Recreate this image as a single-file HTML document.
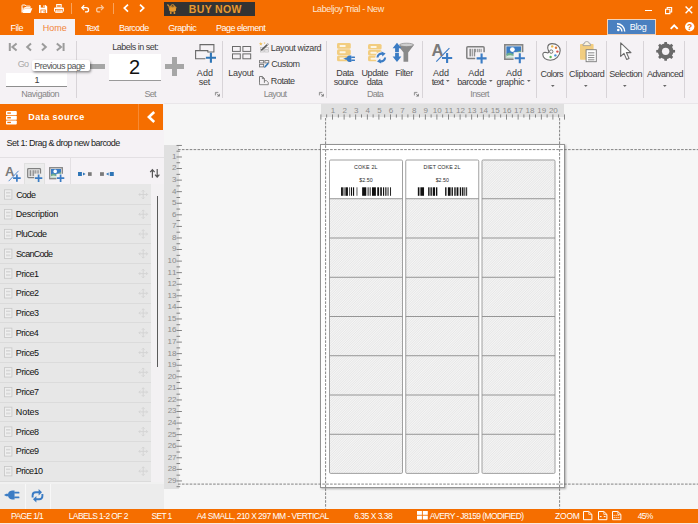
<!DOCTYPE html>
<html><head><meta charset="utf-8"><title>Labeljoy Trial - New</title>
<style>
html,body{margin:0;padding:0;}
body{width:698px;height:524px;overflow:hidden;position:relative;background:#F5F5F5;font-family:"Liberation Sans",sans-serif;}
.a{position:absolute;}
.t{position:absolute;white-space:nowrap;line-height:12px;height:12px;}
svg{position:absolute;overflow:visible;}
</style></head><body>
<div class="a" style="left:0px;top:0px;width:698.00px;height:35.20px;background:#F56E00"></div>
<div class="a" style="left:34.1px;top:18.6px;width:40.50px;height:17.40px;background:#F5F2F5"></div>
<div class="a" style="left:0px;top:35.2px;width:698.00px;height:68.20px;background:#F5F2F5"></div>
<div class="a" style="left:0px;top:103px;width:698.00px;height:1.00px;background:#E9E6E9"></div>
<div class="a" style="left:163.5px;top:104px;width:534.50px;height:405.00px;background:#F6F6F6"></div>
<div class="a" style="left:0px;top:103.4px;width:163.50px;height:405.60px;background:#F5F2F5"></div>
<div class="a" style="left:0px;top:103.6px;width:163.30px;height:26.40px;background:#F56E00"></div>
<div class="a" style="left:138px;top:103.6px;width:1.00px;height:26.40px;background:#F78A33"></div>
<div class="a" style="left:0px;top:156.5px;width:163.50px;height:1.00px;background:#E3E0E3"></div>
<div class="a" style="left:23.5px;top:163px;width:21.30px;height:21.50px;background:#ECECEC;border:1px solid #E0E0E0;border-bottom:none;box-sizing:border-box"></div>
<div class="a" style="left:70px;top:157.5px;width:1.00px;height:27.00px;background:#E3E0E3"></div>
<div class="a" style="left:0px;top:184px;width:163.50px;height:300.00px;background:#F3F1F3"></div>
<div class="a" style="left:0px;top:184.4px;width:151.00px;height:297.20px;background:#E7E7E7"></div>
<div class="a" style="left:0px;top:203.9px;width:151.00px;height:1.00px;background:#DBDBDB"></div>
<div class="a" style="left:0px;top:223.66px;width:151.00px;height:1.00px;background:#DBDBDB"></div>
<div class="a" style="left:0px;top:243.42px;width:151.00px;height:1.00px;background:#DBDBDB"></div>
<div class="a" style="left:0px;top:263.18px;width:151.00px;height:1.00px;background:#DBDBDB"></div>
<div class="a" style="left:0px;top:282.94px;width:151.00px;height:1.00px;background:#DBDBDB"></div>
<div class="a" style="left:0px;top:302.7px;width:151.00px;height:1.00px;background:#DBDBDB"></div>
<div class="a" style="left:0px;top:322.46px;width:151.00px;height:1.00px;background:#DBDBDB"></div>
<div class="a" style="left:0px;top:342.22px;width:151.00px;height:1.00px;background:#DBDBDB"></div>
<div class="a" style="left:0px;top:361.98px;width:151.00px;height:1.00px;background:#DBDBDB"></div>
<div class="a" style="left:0px;top:381.74px;width:151.00px;height:1.00px;background:#DBDBDB"></div>
<div class="a" style="left:0px;top:401.5px;width:151.00px;height:1.00px;background:#DBDBDB"></div>
<div class="a" style="left:0px;top:421.26px;width:151.00px;height:1.00px;background:#DBDBDB"></div>
<div class="a" style="left:0px;top:441.02px;width:151.00px;height:1.00px;background:#DBDBDB"></div>
<div class="a" style="left:0px;top:460.78px;width:151.00px;height:1.00px;background:#DBDBDB"></div>
<div class="a" style="left:0px;top:480.54px;width:151.00px;height:1.00px;background:#DBDBDB"></div>
<div class="a" style="left:0px;top:481.5px;width:163.50px;height:2.00px;background:#F1F1F1"></div>
<div class="a" style="left:156.8px;top:196.3px;width:1.20px;height:170.70px;background:#5A5A5A"></div>
<div class="a" style="left:0px;top:483.5px;width:163.50px;height:25.50px;background:#ECECEC"></div>
<div class="a" style="left:25px;top:484px;width:1.00px;height:25.00px;background:#F7F7F7"></div>
<div class="a" style="left:49.8px;top:484px;width:1.00px;height:25.00px;background:#F7F7F7"></div>
<div class="a" style="left:0px;top:508.5px;width:698.00px;height:14.30px;background:#F56E00"></div>
<div class="a" style="left:0px;top:522.8px;width:698.00px;height:1.20px;background:#FBE9DC"></div>
<div class="a" style="left:76.0px;top:40.5px;width:1.00px;height:57.00px;background:#D8D4D8"></div>
<div class="a" style="left:222.1px;top:40.5px;width:1.00px;height:57.00px;background:#D8D4D8"></div>
<div class="a" style="left:325.9px;top:40.5px;width:1.00px;height:57.00px;background:#D8D4D8"></div>
<div class="a" style="left:422.3px;top:40.5px;width:1.00px;height:57.00px;background:#D8D4D8"></div>
<div class="a" style="left:535.8px;top:40.5px;width:1.00px;height:57.00px;background:#D8D4D8"></div>
<div class="a" style="left:565.8px;top:40.5px;width:1.00px;height:57.00px;background:#D8D4D8"></div>
<div class="a" style="left:606.0px;top:40.5px;width:1.00px;height:57.00px;background:#D8D4D8"></div>
<div class="a" style="left:643.1px;top:40.5px;width:1.00px;height:57.00px;background:#D8D4D8"></div>
<div class="a" style="left:684.0px;top:40.5px;width:1.00px;height:57.00px;background:#D8D4D8"></div>
<div class="a" style="left:6px;top:73.4px;width:61.00px;height:14.00px;background:#fff;border-bottom:1px solid #8E8E8E;box-sizing:border-box"></div>
<div class="a" style="left:109px;top:54px;width:52.00px;height:26.60px;background:#fff;border-bottom:1px solid #9A9A9A;box-sizing:border-box"></div>
<div class="a" style="left:89.5px;top:64px;width:15.50px;height:4.70px;background:#A6A6A6"></div>
<div class="a" style="left:165px;top:64.3px;width:19.00px;height:4.40px;background:#A6A6A6"></div>
<div class="a" style="left:172.3px;top:57px;width:4.40px;height:19.00px;background:#A6A6A6"></div>
<div class="a" style="left:31.5px;top:59.6px;width:58.00px;height:11.90px;background:#fff;border-radius:2px;box-shadow:1px 1.5px 2.5px rgba(0,0,0,.45)"></div>
<div class="a" style="left:163.7px;top:2px;width:91.30px;height:14.00px;background:#333"></div>
<div class="a" style="left:606.7px;top:19.2px;width:49.10px;height:15.60px;background:#4A80C0;border:1px solid #F3D2B8;box-sizing:border-box"></div>
<div class="a" style="left:321px;top:103.8px;width:243.20px;height:13.20px;background:#E0E0E0"></div>
<div class="a" style="left:163.5px;top:145px;width:15.10px;height:343.70px;background:#E0E0E0"></div>
<svg style="left:0px;top:0px;" width="698" height="524" viewBox="0 0 698 524"><rect x="320.50" y="114.4" width="0.8" height="5.2" fill="#6E6E6E"/><rect x="326.30" y="114.4" width="0.8" height="3.2" fill="#6E6E6E"/><rect x="332.10" y="114.4" width="0.8" height="5.2" fill="#6E6E6E"/><rect x="337.90" y="114.4" width="0.8" height="3.2" fill="#6E6E6E"/><rect x="343.70" y="114.4" width="0.8" height="5.2" fill="#6E6E6E"/><rect x="349.50" y="114.4" width="0.8" height="3.2" fill="#6E6E6E"/><rect x="355.30" y="114.4" width="0.8" height="5.2" fill="#6E6E6E"/><rect x="361.10" y="114.4" width="0.8" height="3.2" fill="#6E6E6E"/><rect x="366.90" y="114.4" width="0.8" height="5.2" fill="#6E6E6E"/><rect x="372.70" y="114.4" width="0.8" height="3.2" fill="#6E6E6E"/><rect x="378.50" y="114.4" width="0.8" height="5.2" fill="#6E6E6E"/><rect x="384.30" y="114.4" width="0.8" height="3.2" fill="#6E6E6E"/><rect x="390.10" y="114.4" width="0.8" height="5.2" fill="#6E6E6E"/><rect x="395.90" y="114.4" width="0.8" height="3.2" fill="#6E6E6E"/><rect x="401.70" y="114.4" width="0.8" height="5.2" fill="#6E6E6E"/><rect x="407.50" y="114.4" width="0.8" height="3.2" fill="#6E6E6E"/><rect x="413.30" y="114.4" width="0.8" height="5.2" fill="#6E6E6E"/><rect x="419.10" y="114.4" width="0.8" height="3.2" fill="#6E6E6E"/><rect x="424.90" y="114.4" width="0.8" height="5.2" fill="#6E6E6E"/><rect x="430.70" y="114.4" width="0.8" height="3.2" fill="#6E6E6E"/><rect x="436.50" y="114.4" width="0.8" height="5.2" fill="#6E6E6E"/><rect x="442.30" y="114.4" width="0.8" height="3.2" fill="#6E6E6E"/><rect x="448.10" y="114.4" width="0.8" height="5.2" fill="#6E6E6E"/><rect x="453.90" y="114.4" width="0.8" height="3.2" fill="#6E6E6E"/><rect x="459.70" y="114.4" width="0.8" height="5.2" fill="#6E6E6E"/><rect x="465.50" y="114.4" width="0.8" height="3.2" fill="#6E6E6E"/><rect x="471.30" y="114.4" width="0.8" height="5.2" fill="#6E6E6E"/><rect x="477.10" y="114.4" width="0.8" height="3.2" fill="#6E6E6E"/><rect x="482.90" y="114.4" width="0.8" height="5.2" fill="#6E6E6E"/><rect x="488.70" y="114.4" width="0.8" height="3.2" fill="#6E6E6E"/><rect x="494.50" y="114.4" width="0.8" height="5.2" fill="#6E6E6E"/><rect x="500.30" y="114.4" width="0.8" height="3.2" fill="#6E6E6E"/><rect x="506.10" y="114.4" width="0.8" height="5.2" fill="#6E6E6E"/><rect x="511.90" y="114.4" width="0.8" height="3.2" fill="#6E6E6E"/><rect x="517.70" y="114.4" width="0.8" height="5.2" fill="#6E6E6E"/><rect x="523.50" y="114.4" width="0.8" height="3.2" fill="#6E6E6E"/><rect x="529.30" y="114.4" width="0.8" height="5.2" fill="#6E6E6E"/><rect x="535.10" y="114.4" width="0.8" height="3.2" fill="#6E6E6E"/><rect x="540.90" y="114.4" width="0.8" height="5.2" fill="#6E6E6E"/><rect x="546.70" y="114.4" width="0.8" height="3.2" fill="#6E6E6E"/><rect x="552.50" y="114.4" width="0.8" height="5.2" fill="#6E6E6E"/><rect x="558.30" y="114.4" width="0.8" height="3.2" fill="#6E6E6E"/><rect x="564.10" y="114.4" width="0.8" height="5.2" fill="#6E6E6E"/><rect x="176.5" y="144.95" width="5.4" height="0.9" fill="#777"/><rect x="176.5" y="150.74" width="3.6" height="0.9" fill="#777"/><rect x="176.5" y="156.52" width="5.4" height="0.9" fill="#777"/><rect x="176.5" y="162.31" width="3.6" height="0.9" fill="#777"/><rect x="176.5" y="168.09" width="5.4" height="0.9" fill="#777"/><rect x="176.5" y="173.88" width="3.6" height="0.9" fill="#777"/><rect x="176.5" y="179.66" width="5.4" height="0.9" fill="#777"/><rect x="176.5" y="185.45" width="3.6" height="0.9" fill="#777"/><rect x="176.5" y="191.23" width="5.4" height="0.9" fill="#777"/><rect x="176.5" y="197.02" width="3.6" height="0.9" fill="#777"/><rect x="176.5" y="202.80" width="5.4" height="0.9" fill="#777"/><rect x="176.5" y="208.59" width="3.6" height="0.9" fill="#777"/><rect x="176.5" y="214.37" width="5.4" height="0.9" fill="#777"/><rect x="176.5" y="220.16" width="3.6" height="0.9" fill="#777"/><rect x="176.5" y="225.94" width="5.4" height="0.9" fill="#777"/><rect x="176.5" y="231.73" width="3.6" height="0.9" fill="#777"/><rect x="176.5" y="237.51" width="5.4" height="0.9" fill="#777"/><rect x="176.5" y="243.30" width="3.6" height="0.9" fill="#777"/><rect x="176.5" y="249.08" width="5.4" height="0.9" fill="#777"/><rect x="176.5" y="254.87" width="3.6" height="0.9" fill="#777"/><rect x="176.5" y="260.65" width="5.4" height="0.9" fill="#777"/><rect x="176.5" y="266.44" width="3.6" height="0.9" fill="#777"/><rect x="176.5" y="272.22" width="5.4" height="0.9" fill="#777"/><rect x="176.5" y="278.01" width="3.6" height="0.9" fill="#777"/><rect x="176.5" y="283.79" width="5.4" height="0.9" fill="#777"/><rect x="176.5" y="289.57" width="3.6" height="0.9" fill="#777"/><rect x="176.5" y="295.36" width="5.4" height="0.9" fill="#777"/><rect x="176.5" y="301.15" width="3.6" height="0.9" fill="#777"/><rect x="176.5" y="306.93" width="5.4" height="0.9" fill="#777"/><rect x="176.5" y="312.72" width="3.6" height="0.9" fill="#777"/><rect x="176.5" y="318.50" width="5.4" height="0.9" fill="#777"/><rect x="176.5" y="324.29" width="3.6" height="0.9" fill="#777"/><rect x="176.5" y="330.07" width="5.4" height="0.9" fill="#777"/><rect x="176.5" y="335.86" width="3.6" height="0.9" fill="#777"/><rect x="176.5" y="341.64" width="5.4" height="0.9" fill="#777"/><rect x="176.5" y="347.43" width="3.6" height="0.9" fill="#777"/><rect x="176.5" y="353.21" width="5.4" height="0.9" fill="#777"/><rect x="176.5" y="359.00" width="3.6" height="0.9" fill="#777"/><rect x="176.5" y="364.78" width="5.4" height="0.9" fill="#777"/><rect x="176.5" y="370.56" width="3.6" height="0.9" fill="#777"/><rect x="176.5" y="376.35" width="5.4" height="0.9" fill="#777"/><rect x="176.5" y="382.14" width="3.6" height="0.9" fill="#777"/><rect x="176.5" y="387.92" width="5.4" height="0.9" fill="#777"/><rect x="176.5" y="393.70" width="3.6" height="0.9" fill="#777"/><rect x="176.5" y="399.49" width="5.4" height="0.9" fill="#777"/><rect x="176.5" y="405.28" width="3.6" height="0.9" fill="#777"/><rect x="176.5" y="411.06" width="5.4" height="0.9" fill="#777"/><rect x="176.5" y="416.84" width="3.6" height="0.9" fill="#777"/><rect x="176.5" y="422.63" width="5.4" height="0.9" fill="#777"/><rect x="176.5" y="428.42" width="3.6" height="0.9" fill="#777"/><rect x="176.5" y="434.20" width="5.4" height="0.9" fill="#777"/><rect x="176.5" y="439.99" width="3.6" height="0.9" fill="#777"/><rect x="176.5" y="445.77" width="5.4" height="0.9" fill="#777"/><rect x="176.5" y="451.56" width="3.6" height="0.9" fill="#777"/><rect x="176.5" y="457.34" width="5.4" height="0.9" fill="#777"/><rect x="176.5" y="463.13" width="3.6" height="0.9" fill="#777"/><rect x="176.5" y="468.91" width="5.4" height="0.9" fill="#777"/><rect x="176.5" y="474.69" width="3.6" height="0.9" fill="#777"/><rect x="176.5" y="480.48" width="5.4" height="0.9" fill="#777"/><rect x="176.5" y="486.27" width="3.6" height="0.9" fill="#777"/></svg>
<div class="a" style="left:320px;top:144px;width:245.00px;height:344.00px;background:#fff;border:1px solid #939393;box-sizing:border-box;box-shadow:0.5px 0.5px 2px rgba(0,0,0,.3)"></div>
<svg style="left:0px;top:0px;" width="698" height="524" viewBox="0 0 698 524"><rect x="329.50" y="159.50" width="73.00" height="39.25" fill="#fff"/><rect x="329.50" y="198.75" width="73.00" height="39.25" fill="#FAFAFA"/><rect x="329.50" y="238.00" width="73.00" height="39.25" fill="#FAFAFA"/><rect x="329.50" y="277.25" width="73.00" height="39.25" fill="#FAFAFA"/><rect x="329.50" y="316.50" width="73.00" height="39.25" fill="#FAFAFA"/><rect x="329.50" y="355.75" width="73.00" height="39.25" fill="#FAFAFA"/><rect x="329.50" y="395.00" width="73.00" height="39.25" fill="#FAFAFA"/><rect x="329.50" y="434.25" width="73.00" height="39.25" fill="#FAFAFA"/><rect x="405.75" y="159.50" width="73.00" height="39.25" fill="#fff"/><rect x="405.75" y="198.75" width="73.00" height="39.25" fill="#FAFAFA"/><rect x="405.75" y="238.00" width="73.00" height="39.25" fill="#FAFAFA"/><rect x="405.75" y="277.25" width="73.00" height="39.25" fill="#FAFAFA"/><rect x="405.75" y="316.50" width="73.00" height="39.25" fill="#FAFAFA"/><rect x="405.75" y="355.75" width="73.00" height="39.25" fill="#FAFAFA"/><rect x="405.75" y="395.00" width="73.00" height="39.25" fill="#FAFAFA"/><rect x="405.75" y="434.25" width="73.00" height="39.25" fill="#FAFAFA"/><rect x="482.00" y="159.50" width="73.00" height="39.25" fill="#FAFAFA"/><rect x="482.00" y="198.75" width="73.00" height="39.25" fill="#FAFAFA"/><rect x="482.00" y="238.00" width="73.00" height="39.25" fill="#FAFAFA"/><rect x="482.00" y="277.25" width="73.00" height="39.25" fill="#FAFAFA"/><rect x="482.00" y="316.50" width="73.00" height="39.25" fill="#FAFAFA"/><rect x="482.00" y="355.75" width="73.00" height="39.25" fill="#FAFAFA"/><rect x="482.00" y="395.00" width="73.00" height="39.25" fill="#FAFAFA"/><rect x="482.00" y="434.25" width="73.00" height="39.25" fill="#FAFAFA"/><defs><clipPath id="lc"><rect x="329.50" y="198.75" width="73.00" height="39.25"/><rect x="329.50" y="238.00" width="73.00" height="39.25"/><rect x="329.50" y="277.25" width="73.00" height="39.25"/><rect x="329.50" y="316.50" width="73.00" height="39.25"/><rect x="329.50" y="355.75" width="73.00" height="39.25"/><rect x="329.50" y="395.00" width="73.00" height="39.25"/><rect x="329.50" y="434.25" width="73.00" height="39.25"/><rect x="405.75" y="198.75" width="73.00" height="39.25"/><rect x="405.75" y="238.00" width="73.00" height="39.25"/><rect x="405.75" y="277.25" width="73.00" height="39.25"/><rect x="405.75" y="316.50" width="73.00" height="39.25"/><rect x="405.75" y="355.75" width="73.00" height="39.25"/><rect x="405.75" y="395.00" width="73.00" height="39.25"/><rect x="405.75" y="434.25" width="73.00" height="39.25"/><rect x="482.00" y="159.50" width="73.00" height="39.25"/><rect x="482.00" y="198.75" width="73.00" height="39.25"/><rect x="482.00" y="238.00" width="73.00" height="39.25"/><rect x="482.00" y="277.25" width="73.00" height="39.25"/><rect x="482.00" y="316.50" width="73.00" height="39.25"/><rect x="482.00" y="355.75" width="73.00" height="39.25"/><rect x="482.00" y="395.00" width="73.00" height="39.25"/><rect x="482.00" y="434.25" width="73.00" height="39.25"/></clipPath></defs><path clip-path="url(#lc)" d="M15.00 473.50L329.00 159.50M16.72 473.50L330.72 159.50M18.44 473.50L332.44 159.50M20.16 473.50L334.16 159.50M21.88 473.50L335.88 159.50M23.60 473.50L337.60 159.50M25.32 473.50L339.32 159.50M27.04 473.50L341.04 159.50M28.76 473.50L342.76 159.50M30.48 473.50L344.48 159.50M32.20 473.50L346.20 159.50M33.92 473.50L347.92 159.50M35.64 473.50L349.64 159.50M37.36 473.50L351.36 159.50M39.08 473.50L353.08 159.50M40.80 473.50L354.80 159.50M42.52 473.50L356.52 159.50M44.24 473.50L358.24 159.50M45.96 473.50L359.96 159.50M47.68 473.50L361.68 159.50M49.40 473.50L363.40 159.50M51.12 473.50L365.12 159.50M52.84 473.50L366.84 159.50M54.56 473.50L368.56 159.50M56.28 473.50L370.28 159.50M58.00 473.50L372.00 159.50M59.72 473.50L373.72 159.50M61.44 473.50L375.44 159.50M63.16 473.50L377.16 159.50M64.88 473.50L378.88 159.50M66.60 473.50L380.60 159.50M68.32 473.50L382.32 159.50M70.04 473.50L384.04 159.50M71.76 473.50L385.76 159.50M73.48 473.50L387.48 159.50M75.20 473.50L389.20 159.50M76.92 473.50L390.92 159.50M78.64 473.50L392.64 159.50M80.36 473.50L394.36 159.50M82.08 473.50L396.08 159.50M83.80 473.50L397.80 159.50M85.52 473.50L399.52 159.50M87.24 473.50L401.24 159.50M88.96 473.50L402.96 159.50M90.68 473.50L404.68 159.50M92.40 473.50L406.40 159.50M94.12 473.50L408.12 159.50M95.84 473.50L409.84 159.50M97.56 473.50L411.56 159.50M99.28 473.50L413.28 159.50M101.00 473.50L415.00 159.50M102.72 473.50L416.72 159.50M104.44 473.50L418.44 159.50M106.16 473.50L420.16 159.50M107.88 473.50L421.88 159.50M109.60 473.50L423.60 159.50M111.32 473.50L425.32 159.50M113.04 473.50L427.04 159.50M114.76 473.50L428.76 159.50M116.48 473.50L430.48 159.50M118.20 473.50L432.20 159.50M119.92 473.50L433.92 159.50M121.64 473.50L435.64 159.50M123.36 473.50L437.36 159.50M125.08 473.50L439.08 159.50M126.80 473.50L440.80 159.50M128.52 473.50L442.52 159.50M130.24 473.50L444.24 159.50M131.96 473.50L445.96 159.50M133.68 473.50L447.68 159.50M135.40 473.50L449.40 159.50M137.12 473.50L451.12 159.50M138.84 473.50L452.84 159.50M140.56 473.50L454.56 159.50M142.28 473.50L456.28 159.50M144.00 473.50L458.00 159.50M145.72 473.50L459.72 159.50M147.44 473.50L461.44 159.50M149.16 473.50L463.16 159.50M150.88 473.50L464.88 159.50M152.60 473.50L466.60 159.50M154.32 473.50L468.32 159.50M156.04 473.50L470.04 159.50M157.76 473.50L471.76 159.50M159.48 473.50L473.48 159.50M161.20 473.50L475.20 159.50M162.92 473.50L476.92 159.50M164.64 473.50L478.64 159.50M166.36 473.50L480.36 159.50M168.08 473.50L482.08 159.50M169.80 473.50L483.80 159.50M171.52 473.50L485.52 159.50M173.24 473.50L487.24 159.50M174.96 473.50L488.96 159.50M176.68 473.50L490.68 159.50M178.40 473.50L492.40 159.50M180.12 473.50L494.12 159.50M181.84 473.50L495.84 159.50M183.56 473.50L497.56 159.50M185.28 473.50L499.28 159.50M187.00 473.50L501.00 159.50M188.72 473.50L502.72 159.50M190.44 473.50L504.44 159.50M192.16 473.50L506.16 159.50M193.88 473.50L507.88 159.50M195.60 473.50L509.60 159.50M197.32 473.50L511.32 159.50M199.04 473.50L513.04 159.50M200.76 473.50L514.76 159.50M202.48 473.50L516.48 159.50M204.20 473.50L518.20 159.50M205.92 473.50L519.92 159.50M207.64 473.50L521.64 159.50M209.36 473.50L523.36 159.50M211.08 473.50L525.08 159.50M212.80 473.50L526.80 159.50M214.52 473.50L528.52 159.50M216.24 473.50L530.24 159.50M217.96 473.50L531.96 159.50M219.68 473.50L533.68 159.50M221.40 473.50L535.40 159.50M223.12 473.50L537.12 159.50M224.84 473.50L538.84 159.50M226.56 473.50L540.56 159.50M228.28 473.50L542.28 159.50M230.00 473.50L544.00 159.50M231.72 473.50L545.72 159.50M233.44 473.50L547.44 159.50M235.16 473.50L549.16 159.50M236.88 473.50L550.88 159.50M238.60 473.50L552.60 159.50M240.32 473.50L554.32 159.50M242.04 473.50L556.04 159.50M243.76 473.50L557.76 159.50M245.48 473.50L559.48 159.50M247.20 473.50L561.20 159.50M248.92 473.50L562.92 159.50M250.64 473.50L564.64 159.50M252.36 473.50L566.36 159.50M254.08 473.50L568.08 159.50M255.80 473.50L569.80 159.50M257.52 473.50L571.52 159.50M259.24 473.50L573.24 159.50M260.96 473.50L574.96 159.50M262.68 473.50L576.68 159.50M264.40 473.50L578.40 159.50M266.12 473.50L580.12 159.50M267.84 473.50L581.84 159.50M269.56 473.50L583.56 159.50M271.28 473.50L585.28 159.50M273.00 473.50L587.00 159.50M274.72 473.50L588.72 159.50M276.44 473.50L590.44 159.50M278.16 473.50L592.16 159.50M279.88 473.50L593.88 159.50M281.60 473.50L595.60 159.50M283.32 473.50L597.32 159.50M285.04 473.50L599.04 159.50M286.76 473.50L600.76 159.50M288.48 473.50L602.48 159.50M290.20 473.50L604.20 159.50M291.92 473.50L605.92 159.50M293.64 473.50L607.64 159.50M295.36 473.50L609.36 159.50M297.08 473.50L611.08 159.50M298.80 473.50L612.80 159.50M300.52 473.50L614.52 159.50M302.24 473.50L616.24 159.50M303.96 473.50L617.96 159.50M305.68 473.50L619.68 159.50M307.40 473.50L621.40 159.50M309.12 473.50L623.12 159.50M310.84 473.50L624.84 159.50M312.56 473.50L626.56 159.50M314.28 473.50L628.28 159.50M316.00 473.50L630.00 159.50M317.72 473.50L631.72 159.50M319.44 473.50L633.44 159.50M321.16 473.50L635.16 159.50M322.88 473.50L636.88 159.50M324.60 473.50L638.60 159.50M326.32 473.50L640.32 159.50M328.04 473.50L642.04 159.50M329.76 473.50L643.76 159.50M331.48 473.50L645.48 159.50M333.20 473.50L647.20 159.50M334.92 473.50L648.92 159.50M336.64 473.50L650.64 159.50M338.36 473.50L652.36 159.50M340.08 473.50L654.08 159.50M341.80 473.50L655.80 159.50M343.52 473.50L657.52 159.50M345.24 473.50L659.24 159.50M346.96 473.50L660.96 159.50M348.68 473.50L662.68 159.50M350.40 473.50L664.40 159.50M352.12 473.50L666.12 159.50M353.84 473.50L667.84 159.50M355.56 473.50L669.56 159.50M357.28 473.50L671.28 159.50M359.00 473.50L673.00 159.50M360.72 473.50L674.72 159.50M362.44 473.50L676.44 159.50M364.16 473.50L678.16 159.50M365.88 473.50L679.88 159.50M367.60 473.50L681.60 159.50M369.32 473.50L683.32 159.50M371.04 473.50L685.04 159.50M372.76 473.50L686.76 159.50M374.48 473.50L688.48 159.50M376.20 473.50L690.20 159.50M377.92 473.50L691.92 159.50M379.64 473.50L693.64 159.50M381.36 473.50L695.36 159.50M383.08 473.50L697.08 159.50M384.80 473.50L698.80 159.50M386.52 473.50L700.52 159.50M388.24 473.50L702.24 159.50M389.96 473.50L703.96 159.50M391.68 473.50L705.68 159.50M393.40 473.50L707.40 159.50M395.12 473.50L709.12 159.50M396.84 473.50L710.84 159.50M398.56 473.50L712.56 159.50M400.28 473.50L714.28 159.50M402.00 473.50L716.00 159.50M403.72 473.50L717.72 159.50M405.44 473.50L719.44 159.50M407.16 473.50L721.16 159.50M408.88 473.50L722.88 159.50M410.60 473.50L724.60 159.50M412.32 473.50L726.32 159.50M414.04 473.50L728.04 159.50M415.76 473.50L729.76 159.50M417.48 473.50L731.48 159.50M419.20 473.50L733.20 159.50M420.92 473.50L734.92 159.50M422.64 473.50L736.64 159.50M424.36 473.50L738.36 159.50M426.08 473.50L740.08 159.50M427.80 473.50L741.80 159.50M429.52 473.50L743.52 159.50M431.24 473.50L745.24 159.50M432.96 473.50L746.96 159.50M434.68 473.50L748.68 159.50M436.40 473.50L750.40 159.50M438.12 473.50L752.12 159.50M439.84 473.50L753.84 159.50M441.56 473.50L755.56 159.50M443.28 473.50L757.28 159.50M445.00 473.50L759.00 159.50M446.72 473.50L760.72 159.50M448.44 473.50L762.44 159.50M450.16 473.50L764.16 159.50M451.88 473.50L765.88 159.50M453.60 473.50L767.60 159.50M455.32 473.50L769.32 159.50M457.04 473.50L771.04 159.50M458.76 473.50L772.76 159.50M460.48 473.50L774.48 159.50M462.20 473.50L776.20 159.50M463.92 473.50L777.92 159.50M465.64 473.50L779.64 159.50M467.36 473.50L781.36 159.50M469.08 473.50L783.08 159.50M470.80 473.50L784.80 159.50M472.52 473.50L786.52 159.50M474.24 473.50L788.24 159.50M475.96 473.50L789.96 159.50M477.68 473.50L791.68 159.50M479.40 473.50L793.40 159.50M481.12 473.50L795.12 159.50M482.84 473.50L796.84 159.50M484.56 473.50L798.56 159.50M486.28 473.50L800.28 159.50M488.00 473.50L802.00 159.50M489.72 473.50L803.72 159.50M491.44 473.50L805.44 159.50M493.16 473.50L807.16 159.50M494.88 473.50L808.88 159.50M496.60 473.50L810.60 159.50M498.32 473.50L812.32 159.50M500.04 473.50L814.04 159.50M501.76 473.50L815.76 159.50M503.48 473.50L817.48 159.50M505.20 473.50L819.20 159.50M506.92 473.50L820.92 159.50M508.64 473.50L822.64 159.50M510.36 473.50L824.36 159.50M512.08 473.50L826.08 159.50M513.80 473.50L827.80 159.50M515.52 473.50L829.52 159.50M517.24 473.50L831.24 159.50M518.96 473.50L832.96 159.50M520.68 473.50L834.68 159.50M522.40 473.50L836.40 159.50M524.12 473.50L838.12 159.50M525.84 473.50L839.84 159.50M527.56 473.50L841.56 159.50M529.28 473.50L843.28 159.50M531.00 473.50L845.00 159.50M532.72 473.50L846.72 159.50M534.44 473.50L848.44 159.50M536.16 473.50L850.16 159.50M537.88 473.50L851.88 159.50M539.60 473.50L853.60 159.50M541.32 473.50L855.32 159.50M543.04 473.50L857.04 159.50M544.76 473.50L858.76 159.50M546.48 473.50L860.48 159.50M548.20 473.50L862.20 159.50M549.92 473.50L863.92 159.50M551.64 473.50L865.64 159.50M553.36 473.50L867.36 159.50M555.08 473.50L869.08 159.50" stroke="#DADADA" stroke-width="0.62" fill="none"/><rect x="329.50" y="160.00" width="73.00" height="313.40" rx="1.2" fill="none" stroke="#A0A0A0" stroke-width="1"/><rect x="329.50" y="198.30" width="73.00" height="0.9" fill="#8C8C8C"/><rect x="329.50" y="237.55" width="73.00" height="0.9" fill="#8C8C8C"/><rect x="329.50" y="276.80" width="73.00" height="0.9" fill="#8C8C8C"/><rect x="329.50" y="316.05" width="73.00" height="0.9" fill="#8C8C8C"/><rect x="329.50" y="355.30" width="73.00" height="0.9" fill="#8C8C8C"/><rect x="329.50" y="394.55" width="73.00" height="0.9" fill="#8C8C8C"/><rect x="329.50" y="433.80" width="73.00" height="0.9" fill="#8C8C8C"/><rect x="405.75" y="160.00" width="73.00" height="313.40" rx="1.2" fill="none" stroke="#A0A0A0" stroke-width="1"/><rect x="405.75" y="198.30" width="73.00" height="0.9" fill="#8C8C8C"/><rect x="405.75" y="237.55" width="73.00" height="0.9" fill="#8C8C8C"/><rect x="405.75" y="276.80" width="73.00" height="0.9" fill="#8C8C8C"/><rect x="405.75" y="316.05" width="73.00" height="0.9" fill="#8C8C8C"/><rect x="405.75" y="355.30" width="73.00" height="0.9" fill="#8C8C8C"/><rect x="405.75" y="394.55" width="73.00" height="0.9" fill="#8C8C8C"/><rect x="405.75" y="433.80" width="73.00" height="0.9" fill="#8C8C8C"/><rect x="482.00" y="160.00" width="73.00" height="313.40" rx="1.2" fill="none" stroke="#A0A0A0" stroke-width="1"/><rect x="482.00" y="198.30" width="73.00" height="0.9" fill="#8C8C8C"/><rect x="482.00" y="237.55" width="73.00" height="0.9" fill="#8C8C8C"/><rect x="482.00" y="276.80" width="73.00" height="0.9" fill="#8C8C8C"/><rect x="482.00" y="316.05" width="73.00" height="0.9" fill="#8C8C8C"/><rect x="482.00" y="355.30" width="73.00" height="0.9" fill="#8C8C8C"/><rect x="482.00" y="394.55" width="73.00" height="0.9" fill="#8C8C8C"/><rect x="482.00" y="433.80" width="73.00" height="0.9" fill="#8C8C8C"/></svg>
<svg style="left:0px;top:0px;" width="698" height="524" viewBox="0 0 698 524"><line x1="178" y1="149.6" x2="698" y2="149.6" stroke="#666666" stroke-width="0.8" stroke-dasharray="2.6 1.3"/><line x1="178" y1="484.1" x2="698" y2="484.1" stroke="#666666" stroke-width="0.8" stroke-dasharray="2.6 1.3"/><line x1="325.6" y1="118" x2="325.6" y2="508.5" stroke="#666666" stroke-width="0.8" stroke-dasharray="2.6 1.3"/><line x1="559.6" y1="118" x2="559.6" y2="508.5" stroke="#666666" stroke-width="0.8" stroke-dasharray="2.6 1.3"/></svg>
<svg style="left:0px;top:0px;" width="698" height="524" viewBox="0 0 698 524"><rect x="341.05" y="187.3" width="1.83" height="8.5" fill="#111"/><rect x="343.57" y="187.3" width="0.92" height="8.5" fill="#111"/><rect x="345.40" y="187.3" width="2.52" height="8.5" fill="#111"/><rect x="349.30" y="187.3" width="0.69" height="8.5" fill="#111"/><rect x="350.90" y="187.3" width="1.15" height="8.5" fill="#111"/><rect x="352.97" y="187.3" width="1.15" height="8.5" fill="#111"/><rect x="356.63" y="187.3" width="0.69" height="8.5" fill="#111"/><rect x="362.13" y="187.3" width="4.13" height="8.5" fill="#111"/><rect x="367.64" y="187.3" width="0.92" height="8.5" fill="#111"/><rect x="369.70" y="187.3" width="0.92" height="8.5" fill="#111"/><rect x="371.99" y="187.3" width="3.90" height="8.5" fill="#111"/><rect x="377.26" y="187.3" width="1.83" height="8.5" fill="#111"/><rect x="380.24" y="187.3" width="1.60" height="8.5" fill="#111"/><rect x="382.99" y="187.3" width="1.15" height="8.5" fill="#111"/><rect x="385.29" y="187.3" width="1.15" height="8.5" fill="#111"/><rect x="387.58" y="187.3" width="0.92" height="8.5" fill="#111"/><rect x="390.10" y="187.3" width="0.92" height="8.5" fill="#111"/><rect x="417.84" y="187.3" width="1.60" height="8.5" fill="#111"/><rect x="420.36" y="187.3" width="3.67" height="8.5" fill="#111"/><rect x="428.15" y="187.3" width="1.38" height="8.5" fill="#111"/><rect x="430.44" y="187.3" width="1.38" height="8.5" fill="#111"/><rect x="432.74" y="187.3" width="2.29" height="8.5" fill="#111"/><rect x="435.95" y="187.3" width="1.38" height="8.5" fill="#111"/><rect x="445.11" y="187.3" width="1.38" height="8.5" fill="#111"/><rect x="447.87" y="187.3" width="2.75" height="8.5" fill="#111"/><rect x="451.53" y="187.3" width="1.38" height="8.5" fill="#111"/><rect x="454.28" y="187.3" width="1.38" height="8.5" fill="#111"/><rect x="456.58" y="187.3" width="1.83" height="8.5" fill="#111"/><rect x="459.79" y="187.3" width="1.38" height="8.5" fill="#111"/><rect x="462.08" y="187.3" width="1.38" height="8.5" fill="#111"/><rect x="464.37" y="187.3" width="0.92" height="8.5" fill="#111"/><rect x="466.20" y="187.3" width="0.92" height="8.5" fill="#111"/></svg>
<svg style="left:22.2px;top:4.9px;" width="10.4" height="8" viewBox="0 0 10.4 8"><path d="M0 7.6V0.6Q0 0 .6 0H3.2L4.2 1.1H7.6Q8.2 1.1 8.2 1.7V2.6H2.6L0.9 7.2V2.6" fill="none" stroke="#fff" stroke-width="1"/><path d="M2.7 3.2H10.4L8.4 8H0.7Z" fill="#fff"/></svg>
<svg style="left:38.8px;top:4.9px;" width="8.2" height="8" viewBox="0 0 8.2 8"><path d="M0 0H6.6L8.2 1.4V8H0Z" fill="#fff"/><rect x="1.8" y="0" width="4" height="2.6" fill="#F56E00"/><rect x="4.4" y="0.3" width="1" height="1.8" fill="#fff"/><rect x="1.5" y="4.6" width="5.2" height="3.4" fill="#F56E00"/><rect x="2.3" y="5.3" width="3.6" height="2.7" fill="#fff"/><rect x="4.6" y="5.9" width="0.9" height="1.6" fill="#F56E00"/></svg>
<svg style="left:53.9px;top:4px;" width="9.9" height="8.8" viewBox="0 0 9.9 8.8"><rect x="2.2" y="0" width="5.5" height="3.6" fill="#fff"/><rect x="3.1" y="1" width="3.7" height="0.7" fill="#F56E00"/><rect x="3.1" y="2.2" width="3.7" height="0.7" fill="#F56E00"/><rect x="0" y="3.6" width="9.9" height="4.2" rx="0.8" fill="#fff"/><rect x="1.6" y="5.6" width="6.7" height="3.2" fill="#fff" stroke="#F56E00" stroke-width="0.7"/><rect x="1.2" y="7.4" width="7.5" height="1.4" fill="#fff"/><rect x="2.4" y="6.6" width="5.1" height="0.7" fill="#F56E00"/></svg>
<div class="a" style="left:71px;top:3px;width:1.00px;height:10.60px;background:#F9A45E"></div>
<div class="a" style="left:113px;top:3px;width:1.00px;height:10.60px;background:#F9A45E"></div>
<svg style="left:81px;top:5px;" width="8.2" height="7.2" viewBox="0 0 8.2 7.2"><path d="M3.2 0.3L0.8 2.7L3.2 5.1M0.9 2.7H5.2Q7.6 2.7 7.6 4.9Q7.6 6.9 5.4 6.9H4" fill="none" stroke="#fff" stroke-width="1.25"/></svg>
<svg style="left:96.2px;top:5px;" width="8.2" height="7.2" viewBox="0 0 8.2 7.2"><path d="M5 0.3L7.4 2.7L5 5.1M7.3 2.7H3Q0.6 2.7 0.6 4.9Q0.6 6.9 2.8 6.9H4.2" fill="none" stroke="#FBC79B" stroke-width="1.25"/></svg>
<svg style="left:123.3px;top:4.4px;" width="6" height="8.2" viewBox="0 0 6 8.2"><path d="M5 0.6L1.3 4.1L5 7.6" fill="none" stroke="#fff" stroke-width="1.7"/></svg>
<svg style="left:139px;top:4.4px;" width="6" height="8.2" viewBox="0 0 6 8.2"><path d="M1 0.6L4.7 4.1L1 7.6" fill="none" stroke="#fff" stroke-width="1.7"/></svg>
<svg style="left:166.5px;top:3.5px;" width="9.5" height="10.5" viewBox="0 0 9.5 10.5"><g fill="none" stroke="#E89A2E" stroke-width="1"><path d="M0 1H1.6L3 7.2H8L9 3H2.2"/><circle cx="5.6" cy="2.6" r="1.9"/></g><rect x="3" y="3.4" width="5.6" height="3.6" fill="#E89A2E"/><circle cx="3.8" cy="9" r="0.95" fill="#E89A2E"/><circle cx="7.4" cy="9" r="0.95" fill="#E89A2E"/></svg>
<div class="a" style="left:645.4px;top:10.2px;width:6.60px;height:1.30px;background:#fff"></div>
<svg style="left:665px;top:7px;" width="7.2" height="7.2" viewBox="0 0 7.2 7.2"><path d="M0.55 2.3H4.9V6.65H0.55Z M2.2 2.2V0.55H6.65V5H5" fill="none" stroke="#fff" stroke-width="1.1"/></svg>
<svg style="left:684.5px;top:5.9px;" width="7.8" height="7.8" viewBox="0 0 7.8 7.8"><path d="M0.6 0.6L7.2 7.2M7.2 0.6L0.6 7.2" stroke="#fff" stroke-width="1.4" fill="none"/></svg>
<svg style="left:617.2px;top:23.2px;" width="8.6" height="8.4" viewBox="0 0 8.6 8.4"><circle cx="1.3" cy="7" r="1.3" fill="#fff"/><path d="M0 3.5A4.9 4.9 0 0 1 4.9 8.4M0 0.7A7.7 7.7 0 0 1 7.7 8.4" fill="none" stroke="#fff" stroke-width="1.4"/></svg>
<svg style="left:670px;top:24.2px;" width="8.4" height="5.6" viewBox="0 0 8.4 5.6"><path d="M0.7 4.9L4.2 1.3L7.7 4.9" fill="none" stroke="#fff" stroke-width="1.9"/></svg>
<svg style="left:684.7px;top:22.4px;" width="9.4" height="9.4" viewBox="0 0 9.4 9.4"><circle cx="4.7" cy="4.7" r="4.7" fill="#fff"/></svg>
<svg style="left:9px;top:43px;" width="8.4" height="8" viewBox="0 0 8.4 8"><path d="M0.8 0V8M7.6 0.5L3.4 4L7.6 7.5" fill="none" stroke="#9C9C9C" stroke-width="2"/></svg>
<svg style="left:26px;top:43px;" width="6" height="8" viewBox="0 0 6 8"><path d="M5 0.5L1.2 4L5 7.5" fill="none" stroke="#9C9C9C" stroke-width="2"/></svg>
<svg style="left:41.4px;top:43px;" width="6" height="8" viewBox="0 0 6 8"><path d="M1 0.5L4.8 4L1 7.5" fill="none" stroke="#9C9C9C" stroke-width="2"/></svg>
<svg style="left:55.6px;top:43px;" width="8.4" height="8" viewBox="0 0 8.4 8"><path d="M7.6 0V8M0.8 0.5L5 4L0.8 7.5" fill="none" stroke="#9C9C9C" stroke-width="2"/></svg>
<svg style="left:214.7px;top:92.2px;" width="5" height="4.6" viewBox="0 0 5 4.6"><path d="M0.4 3.4V0.4H3.4" fill="none" stroke="#7A7A7A" stroke-width="0.8"/><path d="M4.8 1.6V4.5H1.9Z" fill="#7A7A7A"/><path d="M1.8 1.6L4 3.8" stroke="#7A7A7A" stroke-width="0.8"/></svg>
<svg style="left:318.9px;top:92.2px;" width="5" height="4.6" viewBox="0 0 5 4.6"><path d="M0.4 3.4V0.4H3.4" fill="none" stroke="#7A7A7A" stroke-width="0.8"/><path d="M4.8 1.6V4.5H1.9Z" fill="#7A7A7A"/><path d="M1.8 1.6L4 3.8" stroke="#7A7A7A" stroke-width="0.8"/></svg>
<svg style="left:414.2px;top:92.2px;" width="5" height="4.6" viewBox="0 0 5 4.6"><path d="M0.4 3.4V0.4H3.4" fill="none" stroke="#7A7A7A" stroke-width="0.8"/><path d="M4.8 1.6V4.5H1.9Z" fill="#7A7A7A"/><path d="M1.8 1.6L4 3.8" stroke="#7A7A7A" stroke-width="0.8"/></svg>
<svg style="left:446.2px;top:80.3px;" width="3.6" height="2" viewBox="0 0 3.6 2"><path d="M0 0H3.6L1.8 2Z" fill="#666"/></svg>
<svg style="left:488.7px;top:80.3px;" width="3.6" height="2" viewBox="0 0 3.6 2"><path d="M0 0H3.6L1.8 2Z" fill="#666"/></svg>
<svg style="left:526.7px;top:80.3px;" width="3.6" height="2" viewBox="0 0 3.6 2"><path d="M0 0H3.6L1.8 2Z" fill="#666"/></svg>
<svg style="left:550.5px;top:84.6px;" width="3.6" height="2" viewBox="0 0 3.6 2"><path d="M0 0H3.6L1.8 2Z" fill="#666"/></svg>
<svg style="left:584.2px;top:84.6px;" width="3.6" height="2" viewBox="0 0 3.6 2"><path d="M0 0H3.6L1.8 2Z" fill="#666"/></svg>
<svg style="left:622.9000000000001px;top:84.6px;" width="3.6" height="2" viewBox="0 0 3.6 2"><path d="M0 0H3.6L1.8 2Z" fill="#666"/></svg>
<svg style="left:662.5px;top:84.6px;" width="3.6" height="2" viewBox="0 0 3.6 2"><path d="M0 0H3.6L1.8 2Z" fill="#666"/></svg>
<svg style="left:194.7px;top:44.2px;" width="21" height="19" viewBox="0 0 21 19"><path d="M5 6.2V0.6H18.9V8H13" fill="none" stroke="#6A6A6A" stroke-width="1.1"/><path d="M10.4 14.8H0.6V6.6H12.8V8.6" fill="none" stroke="#6A6A6A" stroke-width="1.1"/><path d="M15.9 8.8V18.7M10.9 13.7H21" stroke="#2E75B6" stroke-width="2.1"/></svg>
<svg style="left:231.9px;top:45.7px;" width="19.2" height="13.4" viewBox="0 0 19.2 13.4"><g fill="none" stroke="#6A6A6A" stroke-width="1"><rect x="0.5" y="0.5" width="7.8" height="4.9"/><rect x="10.9" y="0.5" width="7.8" height="4.9"/><rect x="0.5" y="7.9" width="7.8" height="4.9"/><rect x="10.9" y="7.9" width="7.8" height="4.9"/></g></svg>
<svg style="left:259px;top:42px;" width="10.4" height="10.4" viewBox="0 0 10.4 10.4"><path d="M1.80 0.00L2.30 1.21L3.61 1.31L2.61 2.16L2.92 3.44L1.80 2.75L0.68 3.44L0.99 2.16L-0.01 1.31L1.30 1.21Z" fill="#EDBE55"/><path d="M5.60 0.00L5.86 0.64L6.55 0.69L6.03 1.14L6.19 1.81L5.60 1.45L5.01 1.81L5.17 1.14L4.65 0.69L5.34 0.64Z" fill="#EDBE55"/><g fill="none" stroke="#BDBDBD" stroke-width="0.7"><rect x="1.4" y="5.4" width="3.6" height="2"/><rect x="5.8" y="5.4" width="3.6" height="2"/><rect x="1.4" y="8" width="3.6" height="2"/><rect x="5.8" y="8" width="3.6" height="2"/></g><path d="M2.2 8.4L9.2 1.8" stroke="#5E5E5E" stroke-width="1.6"/><path d="M8 2.9L9.4 1.6" stroke="#C4C4C4" stroke-width="1.6"/></svg>
<svg style="left:259px;top:60px;" width="10.2" height="8" viewBox="0 0 10.2 8"><g fill="none" stroke="#787878" stroke-width="0.9"><rect x="0.45" y="0.55" width="4.2" height="2.4"/><rect x="5.9" y="0.55" width="3.9" height="2.4"/><rect x="0.45" y="4.4" width="4.2" height="2.5"/></g><path d="M5.1 7.9L5.5 6.2L8.7 2.7L9.9 3.7L6.7 7.3Z" fill="#2E75B6"/></svg>
<svg style="left:259px;top:75.5px;" width="9.8" height="9.2" viewBox="0 0 9.8 9.2"><path d="M0.5 6.8V0.5H3.4L5.4 2.5V6.8 M3.3 0.6V2.6H5.3" fill="none" stroke="#6E6E6E" stroke-width="0.9"/><path d="M0.5 6.6V8.7H9.3V6.4L7.4 4.6H5.6" fill="none" stroke="#7E7E7E" stroke-width="0.9"/></svg>
<svg style="left:337.1px;top:42.9px;" width="19" height="19.6" viewBox="0 0 19 19.6"><rect x="0" y="0.00" width="13.8" height="5.8" rx="1.5" fill="#F2CD80"/><rect x="2.6" y="1.90" width="6" height="2" rx="0.4" fill="#FCF6E6"/><rect x="0" y="6.25" width="13.8" height="5.8" rx="1.5" fill="#F2CD80"/><rect x="2.6" y="8.15" width="6" height="2" rx="0.4" fill="#FCF6E6"/><rect x="0" y="12.50" width="13.8" height="5.8" rx="1.5" fill="#F2CD80"/><rect x="2.6" y="14.40" width="6" height="2" rx="0.4" fill="#FCF6E6"/><rect x="5" y="11.6" width="14" height="8" fill="#F5F2F5" opacity="0"/><g fill="#3B7CC4"><path d="M6.2 15.7L9.6 14.6V16.8Z"/><rect x="8.6" y="14.9" width="2" height="1.6"/><path d="M12.6 12.4H14.4V19H12.6Q9.6 18.6 9.6 15.7Q9.6 12.8 12.6 12.4Z"/><rect x="14.2" y="13.5" width="3.8" height="1.6" rx="0.5"/><rect x="14.2" y="16.4" width="3.8" height="1.6" rx="0.5"/></g></svg>
<svg style="left:368px;top:44.2px;" width="19" height="19" viewBox="0 0 19 19"><rect x="0" y="0.00" width="13.6" height="5.5" rx="1.5" fill="#F2CD80"/><rect x="2.6" y="1.90" width="6" height="2" rx="0.4" fill="#FCF6E6"/><rect x="0" y="5.90" width="13.6" height="5.5" rx="1.5" fill="#F2CD80"/><rect x="2.6" y="7.80" width="6" height="2" rx="0.4" fill="#FCF6E6"/><rect x="0" y="11.80" width="13.6" height="5.5" rx="1.5" fill="#F2CD80"/><rect x="2.6" y="13.70" width="6" height="2" rx="0.4" fill="#FCF6E6"/><circle cx="13.3" cy="13.5" r="6" fill="#F5F2F5"/><g fill="none" stroke="#3B7CC4" stroke-width="2.1"><path d="M9.5 13.4A3.8 3.8 0 0 1 14.6 9.9"/><path d="M17.1 13.6A3.8 3.8 0 0 1 12 17.1"/></g><path d="M13.4 7.6L17.6 9.6L14.4 12.6Z" fill="#3B7CC4"/><path d="M13.2 19.4L9 17.4L12.2 14.4Z" fill="#3B7CC4"/></svg>
<svg style="left:393.2px;top:43.2px;" width="21" height="19" viewBox="0 0 21 19"><path d="M6.6 1.4H20.6V2.6L15.2 9.4V18.7H10.5V9.4L6.6 4.4Z" fill="#8A8A8A"/><ellipse cx="13.6" cy="1.9" rx="7" ry="1.7" fill="#CFCFCF" stroke="#8A8A8A" stroke-width="0.7"/><path d="M4 -0.2L8.4 5.2H5.9V9H2.1V5.2H-0.4Z" fill="#3B7CC4"/><path d="M4 18.9L8.4 13.5H5.9V9.7H2.1V13.5H-0.4Z" fill="#3B7CC4"/></svg>
<svg style="left:0px;top:0px;" width="698" height="524" viewBox="0 0 698 524"><path d="M436.3 61.6L449.4 48.2" stroke="#3B7CC4" stroke-width="1.1"/><path d="M447.1 52.9V62.9M442 58H452.2" stroke="#3B7CC4" stroke-width="2.1" fill="none"/></svg>
<svg style="left:466.3px;top:45.6px;" width="21" height="17.4" viewBox="0 0 21 17.4"><rect x="0.8" y="0.8" width="17.3" height="11.6" rx="1" fill="#F5F2F5" stroke="#808080" stroke-width="1.5"/><g fill="#8E8E8E"><rect x="3.4" y="2.8" width="1.9" height="7.6"/><rect x="6.2" y="2.8" width="1" height="7.6"/><rect x="8" y="2.8" width="1.9" height="7.6"/><rect x="10.8" y="2.8" width="1" height="7.6"/><rect x="12.6" y="2.8" width="1.2" height="7.6"/><rect x="14.6" y="2.8" width="1" height="7.6"/></g><rect x="9.2" y="6.2" width="12" height="12" fill="#F5F2F5"/><path d="M15.6 7.4V17.4M10.6 12.4H20.6" stroke="#3B7CC4" stroke-width="2.1"/></svg>
<svg style="left:504.1px;top:44px;" width="21.4" height="19" viewBox="0 0 21.4 19"><rect x="0.8" y="0.8" width="17.8" height="14.4" fill="#E8E8E8" stroke="#858585" stroke-width="1.6"/><rect x="2.4" y="2.4" width="14.6" height="8.6" fill="#3B7CC4"/><circle cx="8.4" cy="5.6" r="2.4" fill="#fff"/><path d="M2.4 10.2Q5 7.6 8 9.6Q10.4 10.8 13 7.8L17 6.4V13.6H2.4Z" fill="#6FAE8C"/><path d="M2.4 12.2Q6 10.4 9 11.8Q12 12.6 17 9.4V13.6H2.4Z" fill="#DCE9E0"/><rect x="9.6" y="8.2" width="12" height="11.4" fill="#F5F2F5"/><path d="M15.8 9.2V19.2M10.7 14.2H20.9" stroke="#3B7CC4" stroke-width="2.1"/></svg>
<svg style="left:542.3px;top:42.6px;" width="19" height="18" viewBox="0 0 19 18"><path d="M10 0.6C15 0.6 18.2 3.6 18.2 7.6C18.2 12.6 13.6 17.2 8.4 17.2C4 17.2 0.8 14.8 0.8 11.6C0.8 9.4 2.8 9 4.4 9.6C6.2 10.3 7.6 9.4 6.4 7.4C5 4.8 5.4 0.6 10 0.6Z" fill="#FBFBFB" stroke="#6A6A6A" stroke-width="1.1"/><circle cx="9.2" cy="8.6" r="1.7" fill="none" stroke="#6A6A6A" stroke-width="0.9"/><circle cx="10.2" cy="3.4" r="1.2" fill="#E8B84A"/><circle cx="14" cy="4.8" r="1.2" fill="#E07A3A"/><circle cx="15.4" cy="8.6" r="1.2" fill="#D9534F"/><circle cx="13.4" cy="12.4" r="1.2" fill="#4A90D9"/><circle cx="8.6" cy="14" r="1.2" fill="#5CB85C"/></svg>
<svg style="left:580.2px;top:40.6px;" width="17" height="21" viewBox="0 0 17 21"><rect x="0" y="2.9" width="13.6" height="15.8" rx="0.8" fill="#F2CD80"/><path d="M4.2 2.9Q4.2 0.5 6.8 0.5Q9.4 0.5 9.4 2.9H10.6V4.6H3V2.9Z" fill="#FBF3DF" stroke="#9A9A9A" stroke-width="0.8"/><rect x="6.1" y="8.7" width="10.2" height="12" fill="#fff" stroke="#7A7A7A" stroke-width="0.9"/><g fill="#7A7A7A"><rect x="8" y="11.4" width="6.4" height="0.9"/><rect x="8" y="13.8" width="6.4" height="0.9"/><rect x="8" y="16.2" width="6.4" height="0.9"/><rect x="8" y="18.4" width="6.4" height="0.9"/></g></svg>
<svg style="left:620px;top:42px;" width="13" height="18.4" viewBox="0 0 13 18.4"><path d="M0.7 0.9V14.4L4 11.4L6.6 17.4L9 16.4L6.4 10.6H11Z" fill="#FDFDFD" stroke="#6A6A6A" stroke-width="1.1" stroke-linejoin="round"/></svg>
<svg style="left:655.5px;top:42px;" width="19.4" height="18.8" viewBox="0 0 19.4 18.8"><path d="M8.13 2.31L8.39 -0.07L10.91 -0.07L11.17 2.31L13.56 3.30L15.41 1.80L17.20 3.59L15.70 5.44L16.69 7.83L19.07 8.09L19.07 10.61L16.69 10.87L15.70 13.26L17.20 15.11L15.41 16.90L13.56 15.40L11.17 16.39L10.91 18.77L8.39 18.77L8.13 16.39L5.74 15.40L3.89 16.90L2.10 15.11L3.60 13.26L2.61 10.87L0.23 10.61L0.23 8.09L2.61 7.83L3.60 5.44L2.10 3.59L3.89 1.80L5.74 3.30Z" fill="#6A6A6A"/><circle cx="9.65" cy="9.35" r="5.5" fill="none" stroke="#6A6A6A" stroke-width="4.6000000000000005"/><circle cx="9.65" cy="9.35" r="3.7" fill="#F5F2F5"/></svg>
<svg style="left:6.3px;top:110.9px;" width="10.8" height="13.6" viewBox="0 0 10.8 13.6"><rect x="0" y="0.00" width="10.8" height="4.1" rx="0.9" fill="#fff"/><rect x="1.3" y="1.40" width="3.6" height="1.3" fill="#F56E00"/><rect x="0" y="4.70" width="10.8" height="4.1" rx="0.9" fill="#fff"/><rect x="1.3" y="6.10" width="3.6" height="1.3" fill="#F56E00"/><rect x="0" y="9.40" width="10.8" height="4.1" rx="0.9" fill="#fff"/><rect x="1.3" y="10.80" width="3.6" height="1.3" fill="#F56E00"/></svg>
<svg style="left:147px;top:110.8px;" width="8.4" height="12" viewBox="0 0 8.4 12"><path d="M7.2 1L1.9 6L7.2 11" fill="none" stroke="#fff" stroke-width="2.6"/></svg>
<svg style="left:0px;top:0px;" width="698" height="524" viewBox="0 0 698 524"><path d="M8.6 181.2L18.6 170.8" stroke="#3B7CC4" stroke-width="0.9"/><path d="M16.9 174.4V181.8M13.1 178.1H20.7" stroke="#3B7CC4" stroke-width="1.7" fill="none"/></svg>
<svg style="left:27px;top:168.2px;" width="15.5" height="14" viewBox="0 0 15.5 14"><rect x="0.7" y="0.7" width="12.8" height="8.9" rx="0.8" fill="#EBEBEB" stroke="#808080" stroke-width="1.25"/><g fill="#8E8E8E"><rect x="2.6" y="2.2" width="1.4" height="5.9"/><rect x="4.7" y="2.2" width="0.8" height="5.9"/><rect x="6.1" y="2.2" width="1.4" height="5.9"/><rect x="8.2" y="2.2" width="0.8" height="5.9"/><rect x="9.6" y="2.2" width="1" height="5.9"/><rect x="11.1" y="2.2" width="0.7" height="5.9"/></g><rect x="7.2" y="5.6" width="8.4" height="8.6" fill="#EBEBEB"/><path d="M11.6 6.5V13.9M7.9 10.2H15.3" stroke="#3B7CC4" stroke-width="1.7"/></svg>
<svg style="left:49px;top:167.4px;" width="15.5" height="15" viewBox="0 0 15.5 15"><rect x="0.7" y="0.7" width="12.6" height="11" fill="#E8E8E8" stroke="#858585" stroke-width="1.3"/><rect x="2" y="2" width="10" height="6.4" fill="#3B7CC4"/><circle cx="6.2" cy="4.4" r="1.8" fill="#fff"/><path d="M2 7.8Q4 5.8 6 7.2Q7.8 8.2 9.6 6L12 5V10.4H2Z" fill="#6FAE8C"/><path d="M2 9.2Q4.6 8 6.6 9Q9 9.6 12 7.4V10.4H2Z" fill="#DCE9E0"/><rect x="7.4" y="6.8" width="8.4" height="8.4" fill="#F5F2F5"/><path d="M11.6 7.5V14.9M7.9 11.2H15.3" stroke="#3B7CC4" stroke-width="1.7"/></svg>
<svg style="left:78.3px;top:171.8px;" width="14" height="4.2" viewBox="0 0 14 4.2"><rect x="0" y="0" width="3.9" height="4" fill="#2E75B6"/><path d="M5 0.4L7.6 2L5 3.6Z" fill="#2E75B6"/><rect x="10" y="0.2" width="3.7" height="3.7" fill="#7A7A7A"/></svg>
<svg style="left:100px;top:171.8px;" width="14" height="4.2" viewBox="0 0 14 4.2"><rect x="0" y="0.2" width="3.9" height="3.7" fill="#7A7A7A"/><path d="M8.6 0.4L6 2L8.6 3.6Z" fill="#2E75B6"/><rect x="9.8" y="0" width="4" height="4" fill="#2E75B6"/></svg>
<svg style="left:150.2px;top:169.3px;" width="9.8" height="8.8" viewBox="0 0 9.8 8.8"><path d="M2.4 8.8V1M0.2 3.2L2.4 0.7L4.6 3.2M7.2 0V7.8M5 5.6L7.2 8.1L9.4 5.6" fill="none" stroke="#555" stroke-width="1.2"/></svg>
<svg style="left:0px;top:0px;" width="698" height="524" viewBox="0 0 698 524"><rect x="4.5" y="189.80" width="7.4" height="9.4" fill="#EFEFEF" stroke="#C6C6C6" stroke-width="0.8"/><rect x="6" y="191.90" width="4.4" height="1.6" fill="#D6D6D6"/><rect x="6" y="195.10" width="4.4" height="2" fill="#DADADA"/><path d="M143.2 190.30V198.70M139.0 194.50H147.39999999999998" stroke="#D2D2D2" stroke-width="0.9" fill="none"/><path d="M141.7 191.60L143.2 190.10L144.7 191.60M141.7 197.40L143.2 198.90L144.7 197.40M140.29999999999998 193.00L138.79999999999998 194.50L140.29999999999998 196.00M146.1 193.00L147.6 194.50L146.1 196.00" stroke="#D2D2D2" stroke-width="0.8" fill="none"/><rect x="4.5" y="209.56" width="7.4" height="9.4" fill="#EFEFEF" stroke="#C6C6C6" stroke-width="0.8"/><rect x="6" y="211.66" width="4.4" height="1.6" fill="#D6D6D6"/><rect x="6" y="214.86" width="4.4" height="2" fill="#DADADA"/><path d="M143.2 210.06V218.46M139.0 214.26H147.39999999999998" stroke="#D2D2D2" stroke-width="0.9" fill="none"/><path d="M141.7 211.36L143.2 209.86L144.7 211.36M141.7 217.16L143.2 218.66L144.7 217.16M140.29999999999998 212.76L138.79999999999998 214.26L140.29999999999998 215.76M146.1 212.76L147.6 214.26L146.1 215.76" stroke="#D2D2D2" stroke-width="0.8" fill="none"/><rect x="4.5" y="229.32" width="7.4" height="9.4" fill="#EFEFEF" stroke="#C6C6C6" stroke-width="0.8"/><rect x="6" y="231.42" width="4.4" height="1.6" fill="#D6D6D6"/><rect x="6" y="234.62" width="4.4" height="2" fill="#DADADA"/><path d="M143.2 229.82V238.22M139.0 234.02H147.39999999999998" stroke="#D2D2D2" stroke-width="0.9" fill="none"/><path d="M141.7 231.12L143.2 229.62L144.7 231.12M141.7 236.92L143.2 238.42L144.7 236.92M140.29999999999998 232.52L138.79999999999998 234.02L140.29999999999998 235.52M146.1 232.52L147.6 234.02L146.1 235.52" stroke="#D2D2D2" stroke-width="0.8" fill="none"/><rect x="4.5" y="249.08" width="7.4" height="9.4" fill="#EFEFEF" stroke="#C6C6C6" stroke-width="0.8"/><rect x="6" y="251.18" width="4.4" height="1.6" fill="#D6D6D6"/><rect x="6" y="254.38" width="4.4" height="2" fill="#DADADA"/><path d="M143.2 249.58V257.98M139.0 253.78H147.39999999999998" stroke="#D2D2D2" stroke-width="0.9" fill="none"/><path d="M141.7 250.88L143.2 249.38L144.7 250.88M141.7 256.68L143.2 258.18L144.7 256.68M140.29999999999998 252.28L138.79999999999998 253.78L140.29999999999998 255.28M146.1 252.28L147.6 253.78L146.1 255.28" stroke="#D2D2D2" stroke-width="0.8" fill="none"/><rect x="4.5" y="268.84" width="7.4" height="9.4" fill="#EFEFEF" stroke="#C6C6C6" stroke-width="0.8"/><rect x="6" y="270.94" width="4.4" height="1.6" fill="#D6D6D6"/><rect x="6" y="274.14" width="4.4" height="2" fill="#DADADA"/><path d="M143.2 269.34V277.74M139.0 273.54H147.39999999999998" stroke="#D2D2D2" stroke-width="0.9" fill="none"/><path d="M141.7 270.64L143.2 269.14L144.7 270.64M141.7 276.44L143.2 277.94L144.7 276.44M140.29999999999998 272.04L138.79999999999998 273.54L140.29999999999998 275.04M146.1 272.04L147.6 273.54L146.1 275.04" stroke="#D2D2D2" stroke-width="0.8" fill="none"/><rect x="4.5" y="288.60" width="7.4" height="9.4" fill="#EFEFEF" stroke="#C6C6C6" stroke-width="0.8"/><rect x="6" y="290.70" width="4.4" height="1.6" fill="#D6D6D6"/><rect x="6" y="293.90" width="4.4" height="2" fill="#DADADA"/><path d="M143.2 289.10V297.50M139.0 293.30H147.39999999999998" stroke="#D2D2D2" stroke-width="0.9" fill="none"/><path d="M141.7 290.40L143.2 288.90L144.7 290.40M141.7 296.20L143.2 297.70L144.7 296.20M140.29999999999998 291.80L138.79999999999998 293.30L140.29999999999998 294.80M146.1 291.80L147.6 293.30L146.1 294.80" stroke="#D2D2D2" stroke-width="0.8" fill="none"/><rect x="4.5" y="308.36" width="7.4" height="9.4" fill="#EFEFEF" stroke="#C6C6C6" stroke-width="0.8"/><rect x="6" y="310.46" width="4.4" height="1.6" fill="#D6D6D6"/><rect x="6" y="313.66" width="4.4" height="2" fill="#DADADA"/><path d="M143.2 308.86V317.26M139.0 313.06H147.39999999999998" stroke="#D2D2D2" stroke-width="0.9" fill="none"/><path d="M141.7 310.16L143.2 308.66L144.7 310.16M141.7 315.96L143.2 317.46L144.7 315.96M140.29999999999998 311.56L138.79999999999998 313.06L140.29999999999998 314.56M146.1 311.56L147.6 313.06L146.1 314.56" stroke="#D2D2D2" stroke-width="0.8" fill="none"/><rect x="4.5" y="328.12" width="7.4" height="9.4" fill="#EFEFEF" stroke="#C6C6C6" stroke-width="0.8"/><rect x="6" y="330.22" width="4.4" height="1.6" fill="#D6D6D6"/><rect x="6" y="333.42" width="4.4" height="2" fill="#DADADA"/><path d="M143.2 328.62V337.02M139.0 332.82H147.39999999999998" stroke="#D2D2D2" stroke-width="0.9" fill="none"/><path d="M141.7 329.92L143.2 328.42L144.7 329.92M141.7 335.72L143.2 337.22L144.7 335.72M140.29999999999998 331.32L138.79999999999998 332.82L140.29999999999998 334.32M146.1 331.32L147.6 332.82L146.1 334.32" stroke="#D2D2D2" stroke-width="0.8" fill="none"/><rect x="4.5" y="347.88" width="7.4" height="9.4" fill="#EFEFEF" stroke="#C6C6C6" stroke-width="0.8"/><rect x="6" y="349.98" width="4.4" height="1.6" fill="#D6D6D6"/><rect x="6" y="353.18" width="4.4" height="2" fill="#DADADA"/><path d="M143.2 348.38V356.78M139.0 352.58H147.39999999999998" stroke="#D2D2D2" stroke-width="0.9" fill="none"/><path d="M141.7 349.68L143.2 348.18L144.7 349.68M141.7 355.48L143.2 356.98L144.7 355.48M140.29999999999998 351.08L138.79999999999998 352.58L140.29999999999998 354.08M146.1 351.08L147.6 352.58L146.1 354.08" stroke="#D2D2D2" stroke-width="0.8" fill="none"/><rect x="4.5" y="367.64" width="7.4" height="9.4" fill="#EFEFEF" stroke="#C6C6C6" stroke-width="0.8"/><rect x="6" y="369.74" width="4.4" height="1.6" fill="#D6D6D6"/><rect x="6" y="372.94" width="4.4" height="2" fill="#DADADA"/><path d="M143.2 368.14V376.54M139.0 372.34H147.39999999999998" stroke="#D2D2D2" stroke-width="0.9" fill="none"/><path d="M141.7 369.44L143.2 367.94L144.7 369.44M141.7 375.24L143.2 376.74L144.7 375.24M140.29999999999998 370.84L138.79999999999998 372.34L140.29999999999998 373.84M146.1 370.84L147.6 372.34L146.1 373.84" stroke="#D2D2D2" stroke-width="0.8" fill="none"/><rect x="4.5" y="387.40" width="7.4" height="9.4" fill="#EFEFEF" stroke="#C6C6C6" stroke-width="0.8"/><rect x="6" y="389.50" width="4.4" height="1.6" fill="#D6D6D6"/><rect x="6" y="392.70" width="4.4" height="2" fill="#DADADA"/><path d="M143.2 387.90V396.30M139.0 392.10H147.39999999999998" stroke="#D2D2D2" stroke-width="0.9" fill="none"/><path d="M141.7 389.20L143.2 387.70L144.7 389.20M141.7 395.00L143.2 396.50L144.7 395.00M140.29999999999998 390.60L138.79999999999998 392.10L140.29999999999998 393.60M146.1 390.60L147.6 392.10L146.1 393.60" stroke="#D2D2D2" stroke-width="0.8" fill="none"/><rect x="4.5" y="407.16" width="7.4" height="9.4" fill="#EFEFEF" stroke="#C6C6C6" stroke-width="0.8"/><rect x="6" y="409.26" width="4.4" height="1.6" fill="#D6D6D6"/><rect x="6" y="412.46" width="4.4" height="2" fill="#DADADA"/><path d="M143.2 407.66V416.06M139.0 411.86H147.39999999999998" stroke="#D2D2D2" stroke-width="0.9" fill="none"/><path d="M141.7 408.96L143.2 407.46L144.7 408.96M141.7 414.76L143.2 416.26L144.7 414.76M140.29999999999998 410.36L138.79999999999998 411.86L140.29999999999998 413.36M146.1 410.36L147.6 411.86L146.1 413.36" stroke="#D2D2D2" stroke-width="0.8" fill="none"/><rect x="4.5" y="426.92" width="7.4" height="9.4" fill="#EFEFEF" stroke="#C6C6C6" stroke-width="0.8"/><rect x="6" y="429.02" width="4.4" height="1.6" fill="#D6D6D6"/><rect x="6" y="432.22" width="4.4" height="2" fill="#DADADA"/><path d="M143.2 427.42V435.82M139.0 431.62H147.39999999999998" stroke="#D2D2D2" stroke-width="0.9" fill="none"/><path d="M141.7 428.72L143.2 427.22L144.7 428.72M141.7 434.52L143.2 436.02L144.7 434.52M140.29999999999998 430.12L138.79999999999998 431.62L140.29999999999998 433.12M146.1 430.12L147.6 431.62L146.1 433.12" stroke="#D2D2D2" stroke-width="0.8" fill="none"/><rect x="4.5" y="446.68" width="7.4" height="9.4" fill="#EFEFEF" stroke="#C6C6C6" stroke-width="0.8"/><rect x="6" y="448.78" width="4.4" height="1.6" fill="#D6D6D6"/><rect x="6" y="451.98" width="4.4" height="2" fill="#DADADA"/><path d="M143.2 447.18V455.58M139.0 451.38H147.39999999999998" stroke="#D2D2D2" stroke-width="0.9" fill="none"/><path d="M141.7 448.48L143.2 446.98L144.7 448.48M141.7 454.28L143.2 455.78L144.7 454.28M140.29999999999998 449.88L138.79999999999998 451.38L140.29999999999998 452.88M146.1 449.88L147.6 451.38L146.1 452.88" stroke="#D2D2D2" stroke-width="0.8" fill="none"/><rect x="4.5" y="466.44" width="7.4" height="9.4" fill="#EFEFEF" stroke="#C6C6C6" stroke-width="0.8"/><rect x="6" y="468.54" width="4.4" height="1.6" fill="#D6D6D6"/><rect x="6" y="471.74" width="4.4" height="2" fill="#DADADA"/><path d="M143.2 466.94V475.34M139.0 471.14H147.39999999999998" stroke="#D2D2D2" stroke-width="0.9" fill="none"/><path d="M141.7 468.24L143.2 466.74L144.7 468.24M141.7 474.04L143.2 475.54L144.7 474.04M140.29999999999998 469.64L138.79999999999998 471.14L140.29999999999998 472.64M146.1 469.64L147.6 471.14L146.1 472.64" stroke="#D2D2D2" stroke-width="0.8" fill="none"/></svg>
<svg style="left:4.4px;top:490px;" width="15.4" height="10" viewBox="0 0 15.4 10"><g fill="#3B7CC4"><path d="M0 5L2.2 3.8H4.4V6.2H2.2Z"/><path d="M4 5Q4 1 8 0.6H10.6V9.4H8Q4 9 4 5Z"/><rect x="10.2" y="1.7" width="5.2" height="1.9" rx="0.6"/><rect x="10.2" y="6.4" width="5.2" height="1.9" rx="0.6"/></g></svg>
<svg style="left:31.2px;top:488.6px;" width="13" height="13.4" viewBox="0 0 13 13.4"><g fill="none" stroke="#3B7CC4" stroke-width="1.9"><path d="M1.6 8.4V6.4Q1.6 3.2 4.8 3.2H8.4"/><path d="M11.4 5V7Q11.4 10.2 8.2 10.2H4.6"/></g><path d="M7.6 0L11 3.2L7.6 6.4Z" fill="#3B7CC4"/><path d="M5.4 7L2 10.2L5.4 13.4Z" fill="#3B7CC4"/></svg>
<svg style="left:417.4px;top:511.4px;" width="10.8" height="8.6" viewBox="0 0 10.8 8.6"><g fill="#fff"><rect x="0" y="0" width="4.9" height="3.8"/><rect x="5.8" y="0" width="5" height="3.8"/><rect x="0" y="4.7" width="4.9" height="3.8"/><rect x="5.8" y="4.7" width="5" height="3.8"/></g></svg>
<svg style="left:583px;top:510.9px;" width="9.4" height="9.2" viewBox="0 0 9.4 9.2"><path d="M0.5 0.5H5.8L8.9 3.4V8.7H0.5Z" fill="none" stroke="#fff" stroke-width="1"/><path d="M5.8 0.5V3.4H8.9" fill="none" stroke="#fff" stroke-width="0.7"/></svg>
<svg style="left:597.5px;top:510.9px;" width="9.4" height="9.2" viewBox="0 0 9.4 9.2"><path d="M0.5 0.5H5.8L8.9 3.4V8.7H0.5Z" fill="none" stroke="#fff" stroke-width="1"/><path d="M5.8 0.5V3.4H8.9" fill="none" stroke="#fff" stroke-width="0.7"/><path d="M1.8 5.6H3.6M5.8 5.6H7.6" stroke="#fff" stroke-width="1" fill="none"/></svg>
<svg style="left:611.8px;top:510.9px;" width="9.4" height="9.2" viewBox="0 0 9.4 9.2"><path d="M0.5 0.5H5.8L8.9 3.4V8.7H0.5Z" fill="none" stroke="#fff" stroke-width="1"/><path d="M5.8 0.5V3.4H8.9" fill="none" stroke="#fff" stroke-width="0.7"/><path d="M1.6 4.4H7.8M1.6 6.6H7.8" stroke="#fff" stroke-width="0.8" stroke-dasharray="1.2 0.8" fill="none"/></svg>
<span class="t" style="left:10.46px;top:21.70px;font-size:9px;color:#fff;font-weight:normal;letter-spacing:-0.455px;">File</span>
<span class="t" style="left:42.66px;top:21.70px;font-size:9px;color:#F2853A;font-weight:normal;letter-spacing:0.039px;">Home</span>
<span class="t" style="left:85.27px;top:21.70px;font-size:9px;color:#fff;font-weight:normal;letter-spacing:-0.720px;">Text</span>
<span class="t" style="left:119.06px;top:21.70px;font-size:9px;color:#fff;font-weight:normal;letter-spacing:-0.563px;">Barcode</span>
<span class="t" style="left:168.35px;top:21.70px;font-size:9px;color:#fff;font-weight:normal;letter-spacing:-0.504px;">Graphic</span>
<span class="t" style="left:216.06px;top:21.70px;font-size:9px;color:#fff;font-weight:normal;letter-spacing:-0.538px;">Page element</span>
<span class="t" style="left:312.46px;top:3.40px;font-size:9px;color:#FDE8D6;font-weight:normal;letter-spacing:-0.385px;">Labeljoy Trial - New</span>
<span class="t" style="left:188.79px;top:3.00px;font-size:10.5px;color:#E89A2E;font-weight:bold;letter-spacing:0.346px;">BUY NOW</span>
<span class="t" style="left:629.76px;top:21.30px;font-size:9px;color:#fff;font-weight:normal;letter-spacing:-0.332px;">Blog</span>
<span class="t" style="left:17.82px;top:58.00px;font-size:9px;color:#A8A8A8;font-weight:normal;letter-spacing:-0.720px;">Go</span>
<span class="t" style="left:34.26px;top:59.70px;font-size:9px;color:#555;font-weight:normal;letter-spacing:-0.534px;">Previous page</span>
<span class="t" style="left:34.38px;top:74.30px;font-size:9px;color:#3C3C3C;font-weight:normal;letter-spacing:0.000px;">1</span>
<span class="t" style="left:21.26px;top:88.20px;font-size:9px;color:#868686;font-weight:normal;letter-spacing:-0.466px;">Navigation</span>
<span class="t" style="left:112.26px;top:41.00px;font-size:9px;color:#3C3C3C;font-weight:normal;letter-spacing:-0.498px;">Labels in set:</span>
<span class="t" style="left:128.95px;top:61.00px;font-size:20px;color:#111;font-weight:normal;letter-spacing:0.000px;">2</span>
<span class="t" style="left:196.83px;top:67.00px;font-size:9px;color:#3C3C3C;font-weight:normal;letter-spacing:0.044px;">Add</span>
<span class="t" style="left:198.85px;top:75.60px;font-size:9px;color:#3C3C3C;font-weight:normal;letter-spacing:-0.339px;">set</span>
<span class="t" style="left:144.50px;top:88.20px;font-size:9px;color:#868686;font-weight:normal;letter-spacing:-0.720px;">Set</span>
<span class="t" style="left:228.26px;top:67.00px;font-size:9px;color:#3C3C3C;font-weight:normal;letter-spacing:-0.282px;">Layout</span>
<span class="t" style="left:270.86px;top:41.80px;font-size:9px;color:#3C3C3C;font-weight:normal;letter-spacing:-0.402px;">Layout wizard</span>
<span class="t" style="left:271.15px;top:58.00px;font-size:9px;color:#3C3C3C;font-weight:normal;letter-spacing:-0.414px;">Custom</span>
<span class="t" style="left:270.86px;top:74.90px;font-size:9px;color:#3C3C3C;font-weight:normal;letter-spacing:-0.476px;">Rotate</span>
<span class="t" style="left:263.65px;top:88.20px;font-size:9px;color:#868686;font-weight:normal;letter-spacing:-0.720px;">Layout</span>
<span class="t" style="left:336.36px;top:67.00px;font-size:9px;color:#3C3C3C;font-weight:normal;letter-spacing:-0.416px;">Data</span>
<span class="t" style="left:333.75px;top:75.60px;font-size:9px;color:#3C3C3C;font-weight:normal;letter-spacing:-0.494px;">source</span>
<span class="t" style="left:361.50px;top:67.00px;font-size:9px;color:#3C3C3C;font-weight:normal;letter-spacing:-0.424px;">Update</span>
<span class="t" style="left:366.87px;top:75.60px;font-size:9px;color:#3C3C3C;font-weight:normal;letter-spacing:-0.541px;">data</span>
<span class="t" style="left:395.26px;top:67.00px;font-size:9px;color:#3C3C3C;font-weight:normal;letter-spacing:-0.425px;">Filter</span>
<span class="t" style="left:366.96px;top:88.20px;font-size:9px;color:#868686;font-weight:normal;letter-spacing:-0.720px;">Data</span>
<span class="t" style="left:432.93px;top:67.00px;font-size:9px;color:#3C3C3C;font-weight:normal;letter-spacing:0.044px;">Add</span>
<span class="t" style="left:431.69px;top:75.60px;font-size:9px;color:#3C3C3C;font-weight:normal;letter-spacing:-0.720px;">text</span>
<span class="t" style="left:468.23px;top:67.00px;font-size:9px;color:#3C3C3C;font-weight:normal;letter-spacing:0.044px;">Add</span>
<span class="t" style="left:457.31px;top:75.60px;font-size:9px;color:#3C3C3C;font-weight:normal;letter-spacing:-0.524px;">barcode</span>
<span class="t" style="left:506.03px;top:67.00px;font-size:9px;color:#3C3C3C;font-weight:normal;letter-spacing:0.044px;">Add</span>
<span class="t" style="left:496.62px;top:75.60px;font-size:9px;color:#3C3C3C;font-weight:normal;letter-spacing:-0.265px;">graphic</span>
<span class="t" style="left:470.37px;top:88.20px;font-size:9px;color:#868686;font-weight:normal;letter-spacing:-0.660px;">Insert</span>
<span class="t" style="left:540.55px;top:68.20px;font-size:9px;color:#3C3C3C;font-weight:normal;letter-spacing:-0.609px;">Colors</span>
<span class="t" style="left:569.05px;top:68.20px;font-size:9px;color:#3C3C3C;font-weight:normal;letter-spacing:-0.338px;">Clipboard</span>
<span class="t" style="left:609.30px;top:68.20px;font-size:9px;color:#3C3C3C;font-weight:normal;letter-spacing:-0.478px;">Selection</span>
<span class="t" style="left:646.88px;top:68.20px;font-size:9px;color:#3C3C3C;font-weight:normal;letter-spacing:-0.477px;">Advanced</span>
<span class="t" style="left:28.29px;top:110.90px;font-size:9px;color:#fff;font-weight:bold;letter-spacing:0.450px;">Data source</span>
<span class="t" style="left:6.59px;top:137.00px;font-size:9px;color:#222;font-weight:normal;letter-spacing:-0.510px;">Set 1: Drag &amp; drop new barcode</span>
<span class="t" style="left:16.15px;top:188.50px;font-size:9px;color:#111;font-weight:normal;letter-spacing:-0.559px;">Code</span>
<span class="t" style="left:15.86px;top:208.26px;font-size:9px;color:#111;font-weight:normal;letter-spacing:-0.267px;">Description</span>
<span class="t" style="left:15.86px;top:228.02px;font-size:9px;color:#111;font-weight:normal;letter-spacing:-0.565px;">PluCode</span>
<span class="t" style="left:16.09px;top:247.78px;font-size:9px;color:#111;font-weight:normal;letter-spacing:-0.720px;">ScanCode</span>
<span class="t" style="left:15.86px;top:267.54px;font-size:9px;color:#111;font-weight:normal;letter-spacing:-0.465px;">Price1</span>
<span class="t" style="left:15.86px;top:287.30px;font-size:9px;color:#111;font-weight:normal;letter-spacing:-0.460px;">Price2</span>
<span class="t" style="left:15.86px;top:307.06px;font-size:9px;color:#111;font-weight:normal;letter-spacing:-0.473px;">Price3</span>
<span class="t" style="left:15.86px;top:326.82px;font-size:9px;color:#111;font-weight:normal;letter-spacing:-0.501px;">Price4</span>
<span class="t" style="left:15.86px;top:346.58px;font-size:9px;color:#111;font-weight:normal;letter-spacing:-0.478px;">Price5</span>
<span class="t" style="left:15.86px;top:366.34px;font-size:9px;color:#111;font-weight:normal;letter-spacing:-0.473px;">Price6</span>
<span class="t" style="left:15.86px;top:386.10px;font-size:9px;color:#111;font-weight:normal;letter-spacing:-0.460px;">Price7</span>
<span class="t" style="left:15.86px;top:405.86px;font-size:9px;color:#111;font-weight:normal;letter-spacing:-0.114px;">Notes</span>
<span class="t" style="left:15.86px;top:425.62px;font-size:9px;color:#111;font-weight:normal;letter-spacing:-0.473px;">Price8</span>
<span class="t" style="left:15.86px;top:445.38px;font-size:9px;color:#111;font-weight:normal;letter-spacing:-0.469px;">Price9</span>
<span class="t" style="left:15.86px;top:465.14px;font-size:9px;color:#111;font-weight:normal;letter-spacing:-0.572px;">Price10</span>
<span class="t" style="left:11.00px;top:510.00px;font-size:8.5px;color:#fff;font-weight:normal;letter-spacing:-0.623px;">PAGE 1/1</span>
<span class="t" style="left:68.70px;top:510.00px;font-size:8.5px;color:#fff;font-weight:normal;letter-spacing:-0.593px;">LABELS 1-2 OF 2</span>
<span class="t" style="left:151.49px;top:510.00px;font-size:8.5px;color:#fff;font-weight:normal;letter-spacing:-0.680px;">SET 1</span>
<span class="t" style="left:196.68px;top:510.00px;font-size:8.5px;color:#fff;font-weight:normal;letter-spacing:-0.531px;">A4 SMALL, 210 X 297 MM - VERTICAL</span>
<span class="t" style="left:354.27px;top:510.00px;font-size:8.5px;color:#fff;font-weight:normal;letter-spacing:-0.509px;">6.35 X 3.38</span>
<span class="t" style="left:429.78px;top:510.00px;font-size:8.5px;color:#fff;font-weight:normal;letter-spacing:-0.605px;">AVERY - J8159 (MODIFIED)</span>
<span class="t" style="left:555.02px;top:510.00px;font-size:8.5px;color:#fff;font-weight:normal;letter-spacing:-0.207px;">ZOOM</span>
<span class="t" style="left:637.63px;top:510.00px;font-size:8.5px;color:#fff;font-weight:normal;letter-spacing:-0.680px;">45%</span>
<span class="t" style="left:330.67px;top:104.80px;font-size:8px;color:#8C8C8C;font-weight:normal;letter-spacing:0.000px;">1</span>
<span class="t" style="left:342.38px;top:104.80px;font-size:8px;color:#8C8C8C;font-weight:normal;letter-spacing:0.000px;">2</span>
<span class="t" style="left:354.00px;top:104.80px;font-size:8px;color:#8C8C8C;font-weight:normal;letter-spacing:0.000px;">3</span>
<span class="t" style="left:365.60px;top:104.80px;font-size:8px;color:#8C8C8C;font-weight:normal;letter-spacing:0.000px;">4</span>
<span class="t" style="left:377.18px;top:104.80px;font-size:8px;color:#8C8C8C;font-weight:normal;letter-spacing:0.000px;">5</span>
<span class="t" style="left:388.75px;top:104.80px;font-size:8px;color:#8C8C8C;font-weight:normal;letter-spacing:0.000px;">6</span>
<span class="t" style="left:400.37px;top:104.80px;font-size:8px;color:#8C8C8C;font-weight:normal;letter-spacing:0.000px;">7</span>
<span class="t" style="left:411.98px;top:104.80px;font-size:8px;color:#8C8C8C;font-weight:normal;letter-spacing:0.000px;">8</span>
<span class="t" style="left:423.57px;top:104.80px;font-size:8px;color:#8C8C8C;font-weight:normal;letter-spacing:0.000px;">9</span>
<span class="t" style="left:432.80px;top:104.80px;font-size:8px;color:#8C8C8C;font-weight:normal;letter-spacing:0.020px;">10</span>
<span class="t" style="left:444.46px;top:104.80px;font-size:8px;color:#8C8C8C;font-weight:normal;letter-spacing:0.560px;">11</span>
<span class="t" style="left:456.00px;top:104.80px;font-size:8px;color:#8C8C8C;font-weight:normal;letter-spacing:0.120px;">12</span>
<span class="t" style="left:467.60px;top:104.80px;font-size:8px;color:#8C8C8C;font-weight:normal;letter-spacing:0.060px;">13</span>
<span class="t" style="left:479.20px;top:104.80px;font-size:8px;color:#8C8C8C;font-weight:normal;letter-spacing:-0.060px;">14</span>
<span class="t" style="left:490.80px;top:104.80px;font-size:8px;color:#8C8C8C;font-weight:normal;letter-spacing:0.040px;">15</span>
<span class="t" style="left:502.40px;top:104.80px;font-size:8px;color:#8C8C8C;font-weight:normal;letter-spacing:0.060px;">16</span>
<span class="t" style="left:514.00px;top:104.80px;font-size:8px;color:#8C8C8C;font-weight:normal;letter-spacing:0.120px;">17</span>
<span class="t" style="left:525.60px;top:104.80px;font-size:8px;color:#8C8C8C;font-weight:normal;letter-spacing:0.060px;">18</span>
<span class="t" style="left:537.20px;top:104.80px;font-size:8px;color:#8C8C8C;font-weight:normal;letter-spacing:0.080px;">19</span>
<span class="t" style="left:549.00px;top:104.80px;font-size:8px;color:#8C8C8C;font-weight:normal;letter-spacing:-0.180px;">20</span>
<span class="t" style="left:171.97px;top:150.87px;font-size:8px;color:#8C8C8C;font-weight:normal;letter-spacing:0.000px;">1</span>
<span class="t" style="left:172.08px;top:162.44px;font-size:8px;color:#8C8C8C;font-weight:normal;letter-spacing:0.000px;">2</span>
<span class="t" style="left:172.10px;top:174.01px;font-size:8px;color:#8C8C8C;font-weight:normal;letter-spacing:0.000px;">3</span>
<span class="t" style="left:172.10px;top:185.58px;font-size:8px;color:#8C8C8C;font-weight:normal;letter-spacing:0.000px;">4</span>
<span class="t" style="left:172.08px;top:197.15px;font-size:8px;color:#8C8C8C;font-weight:normal;letter-spacing:0.000px;">5</span>
<span class="t" style="left:172.05px;top:208.72px;font-size:8px;color:#8C8C8C;font-weight:normal;letter-spacing:0.000px;">6</span>
<span class="t" style="left:172.07px;top:220.29px;font-size:8px;color:#8C8C8C;font-weight:normal;letter-spacing:0.000px;">7</span>
<span class="t" style="left:172.08px;top:231.86px;font-size:8px;color:#8C8C8C;font-weight:normal;letter-spacing:0.000px;">8</span>
<span class="t" style="left:172.07px;top:243.43px;font-size:8px;color:#8C8C8C;font-weight:normal;letter-spacing:0.000px;">9</span>
<span class="t" style="left:167.50px;top:255.00px;font-size:8px;color:#8C8C8C;font-weight:normal;letter-spacing:0.020px;">10</span>
<span class="t" style="left:167.56px;top:266.57px;font-size:8px;color:#8C8C8C;font-weight:normal;letter-spacing:0.560px;">11</span>
<span class="t" style="left:167.50px;top:278.14px;font-size:8px;color:#8C8C8C;font-weight:normal;letter-spacing:0.120px;">12</span>
<span class="t" style="left:167.50px;top:289.71px;font-size:8px;color:#8C8C8C;font-weight:normal;letter-spacing:0.060px;">13</span>
<span class="t" style="left:167.50px;top:301.28px;font-size:8px;color:#8C8C8C;font-weight:normal;letter-spacing:-0.060px;">14</span>
<span class="t" style="left:167.50px;top:312.85px;font-size:8px;color:#8C8C8C;font-weight:normal;letter-spacing:0.040px;">15</span>
<span class="t" style="left:167.50px;top:324.42px;font-size:8px;color:#8C8C8C;font-weight:normal;letter-spacing:0.060px;">16</span>
<span class="t" style="left:167.50px;top:335.99px;font-size:8px;color:#8C8C8C;font-weight:normal;letter-spacing:0.120px;">17</span>
<span class="t" style="left:167.50px;top:347.56px;font-size:8px;color:#8C8C8C;font-weight:normal;letter-spacing:0.060px;">18</span>
<span class="t" style="left:167.50px;top:359.13px;font-size:8px;color:#8C8C8C;font-weight:normal;letter-spacing:0.080px;">19</span>
<span class="t" style="left:167.70px;top:370.70px;font-size:8px;color:#8C8C8C;font-weight:normal;letter-spacing:-0.180px;">20</span>
<span class="t" style="left:167.70px;top:382.27px;font-size:8px;color:#8C8C8C;font-weight:normal;letter-spacing:-0.100px;">21</span>
<span class="t" style="left:167.70px;top:393.84px;font-size:8px;color:#8C8C8C;font-weight:normal;letter-spacing:-0.080px;">22</span>
<span class="t" style="left:167.70px;top:405.41px;font-size:8px;color:#8C8C8C;font-weight:normal;letter-spacing:-0.140px;">23</span>
<span class="t" style="left:167.70px;top:416.98px;font-size:8px;color:#8C8C8C;font-weight:normal;letter-spacing:-0.260px;">24</span>
<span class="t" style="left:167.70px;top:428.55px;font-size:8px;color:#8C8C8C;font-weight:normal;letter-spacing:-0.160px;">25</span>
<span class="t" style="left:167.70px;top:440.12px;font-size:8px;color:#8C8C8C;font-weight:normal;letter-spacing:-0.140px;">26</span>
<span class="t" style="left:167.70px;top:451.69px;font-size:8px;color:#8C8C8C;font-weight:normal;letter-spacing:-0.080px;">27</span>
<span class="t" style="left:167.70px;top:463.26px;font-size:8px;color:#8C8C8C;font-weight:normal;letter-spacing:-0.140px;">28</span>
<span class="t" style="left:167.70px;top:474.83px;font-size:8px;color:#8C8C8C;font-weight:normal;letter-spacing:-0.120px;">29</span>
<span class="t" style="left:354.04px;top:161.20px;font-size:5.3px;color:#2A2A2A;font-weight:normal;letter-spacing:0.176px;">COKE 2L</span>
<span class="t" style="left:359.35px;top:174.00px;font-size:5.3px;color:#2A2A2A;font-weight:normal;letter-spacing:-0.003px;">$2.50</span>
<span class="t" style="left:423.56px;top:161.20px;font-size:5.3px;color:#2A2A2A;font-weight:normal;letter-spacing:0.089px;">DIET COKE 2L</span>
<span class="t" style="left:435.65px;top:174.00px;font-size:5.3px;color:#2A2A2A;font-weight:normal;letter-spacing:0.022px;">$2.50</span>
<span class="t" style="left:686.95px;top:21.30px;font-size:8.5px;color:#F56E00;font-weight:bold;letter-spacing:0.000px;">?</span>
<span class="t" style="left:431.51px;top:43.50px;font-size:16.5px;color:#7A7A7A;font-weight:bold;letter-spacing:0.000px;">A</span>
<span class="t" style="left:5.12px;top:165.70px;font-size:13px;color:#7A7A7A;font-weight:bold;letter-spacing:0.000px;">A</span>
</body></html>
